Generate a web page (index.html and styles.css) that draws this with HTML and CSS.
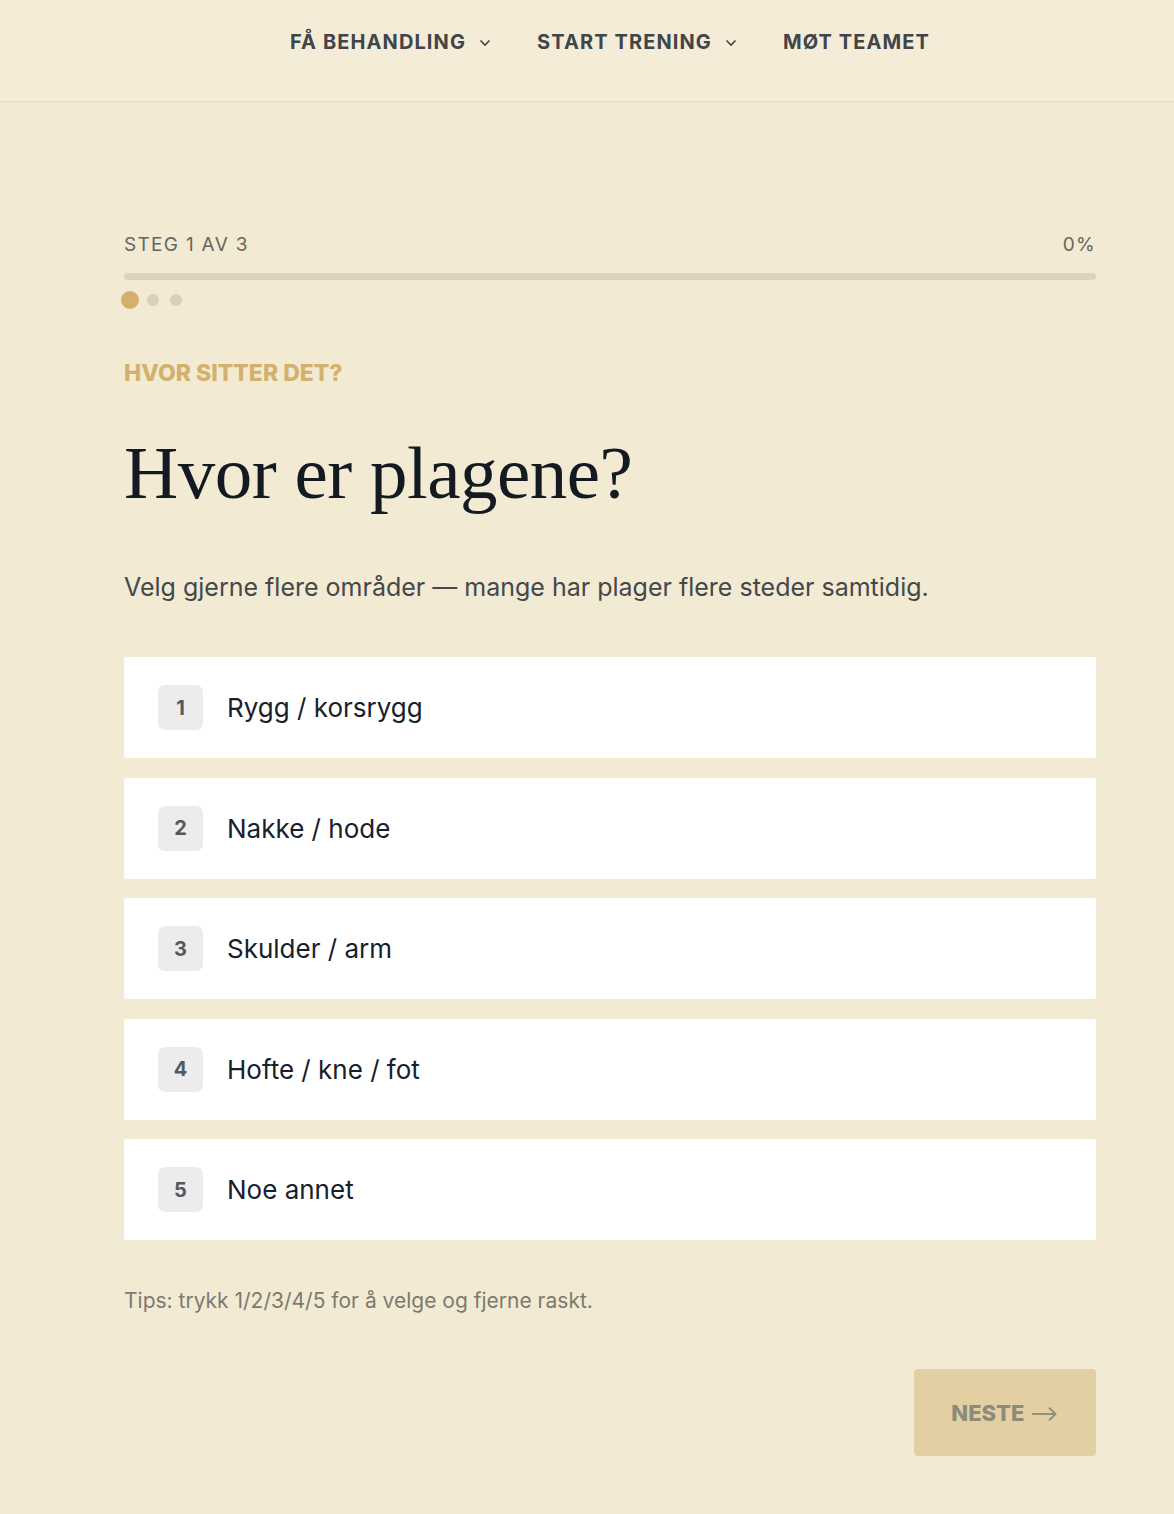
FILE: index.html
```html
<!doctype html>
<html lang="no">

<head>
    <meta charset="utf-8" />
    <meta name="viewport" content="width=device-width, initial-scale=1">
    <link rel="stylesheet" href="styles.css">
</head>

<body>
    <header class="topnav">
        <nav class="menu">
            <a class="menu-item" href="#">Få behandling
                <svg class="caret" viewBox="0 0 12 8" width="12" height="8"><path d="M1.5 1.5 6 6l4.5-4.5" fill="none" stroke="currentColor" stroke-width="1.6"/></svg>
            </a>
            <a class="menu-item" href="#">Start trening
                <svg class="caret" viewBox="0 0 12 8" width="12" height="8"><path d="M1.5 1.5 6 6l4.5-4.5" fill="none" stroke="currentColor" stroke-width="1.6"/></svg>
            </a>
            <a class="menu-item" href="#">Møt teamet</a>
        </nav>
    </header>

    <main class="quiz">
        <div class="progress-head">
            <span>Steg 1 av 3</span>
            <span>0%</span>
        </div>
        <div class="progress-bar"><div class="progress-fill"></div></div>
        <div class="dots">
            <span class="dot active"></span>
            <span class="dot"></span>
            <span class="dot"></span>
        </div>

        <p class="eyebrow">Hvor sitter det?</p>
        <h1 class="question">Hvor er plagene?</h1>
        <p class="lead">Velg gjerne flere områder — mange har plager flere steder samtidig.</p>

        <div class="options">
            <button class="option"><span class="key">1</span>Rygg / korsrygg</button>
            <button class="option"><span class="key">2</span>Nakke / hode</button>
            <button class="option"><span class="key">3</span>Skulder / arm</button>
            <button class="option"><span class="key">4</span>Hofte / kne / fot</button>
            <button class="option"><span class="key">5</span>Noe annet</button>
        </div>

        <p class="tip">Tips: trykk 1/2/3/4/5 for å velge og fjerne raskt.</p>

        <div class="actions">
            <button class="next" disabled>Neste <span class="arrow">⟶</span></button>
        </div>
    </main>
</body>

</html>
```

FILE: styles.css
```css
html {
    font-family: "Inter", "Liberation Sans", sans-serif;
    font-size: 16px;
    line-height: 1.5;
    background: #f2ead3;
    color: #1a1f28;
}

body {
    margin: 0;
}

.topnav {
    height: 102px;
    box-sizing: border-box;
    border-bottom: 1px solid #e2dbc6;
    background: #f4ecd6;
    display: flex;
    justify-content: center;
    align-items: center;
    padding-left: 46px;
}

.menu {
    display: flex;
    gap: 46px;
    padding-bottom: 18px;
}

.menu-item {
    display: flex;
    align-items: center;
    gap: 10px;
    font-size: 20px;
    font-weight: 700;
    text-transform: uppercase;
    letter-spacing: 1.1px;
    color: #41454a;
    text-decoration: none;
}

.caret {
    margin-left: 3px;
    margin-top: 2px;
}

.quiz {
    width: 972px;
    margin-left: 124px;
    padding-top: 130px;
    padding-bottom: 59px;
}

.progress-head {
    display: flex;
    justify-content: space-between;
    font-size: 19px;
    color: #66665f;
    text-transform: uppercase;
    letter-spacing: 1.3px;
    line-height: 26px;
}

.progress-bar {
    margin-top: 15px;
    height: 7px;
    border-radius: 4px;
    background: #dbd5c0;
}

.progress-fill {
    width: 0;
    height: 100%;
}

.dots {
    display: flex;
    align-items: center;
    gap: 11px;
    height: 18px;
    margin-top: 11px;
}

.dot {
    width: 12px;
    height: 12px;
    border-radius: 50%;
    background: #d6d0bd;
}

.dot.active {
    background: #d3b16c;
    transform: scale(1.5);
}

.eyebrow {
    margin: 49px 0 0;
    font-size: 23px;
    font-weight: 800;
    color: #d3b16c;
    text-transform: uppercase;
    letter-spacing: 0;
    line-height: 30px;
}

.question {
    margin: 40px 0 0;
    font-family: "Liberation Serif", serif;
    font-weight: 400;
    font-size: 75px;
    line-height: 90px;
    letter-spacing: -0.5px;
    color: #141a22;
}

.lead {
    margin: 52px 0 0;
    font-size: 25px;
    color: #44484b;
    letter-spacing: 0;
    line-height: 34px;
}

.options {
    margin-top: 53px;
    display: flex;
    flex-direction: column;
    gap: 19.5px;
}

.option {
    display: flex;
    align-items: center;
    gap: 24px;
    height: 101px;
    padding: 0 34px;
    border: 0;
    border-radius: 2px;
    background: #fff;
    font-family: inherit;
    font-size: 26px;
    letter-spacing: 0;
    color: #17202b;
    text-align: left;
    cursor: pointer;
}

.key {
    display: flex;
    justify-content: center;
    align-items: center;
    width: 45px;
    height: 45px;
    border-radius: 7px;
    background: #ececec;
    font-size: 20px;
    font-weight: 700;
    color: #55585c;
    letter-spacing: 0;
}

.tip {
    margin: 46px 0 0;
    font-size: 21px;
    color: #7c7a70;
    letter-spacing: 0;
    line-height: 30px;
}

.actions {
    display: flex;
    justify-content: flex-end;
    margin-top: 53px;
}

.next {
    width: 182px;
    height: 87px;
    border: 0;
    border-radius: 4px;
    background: #e3d0a2;
    font-family: inherit;
    font-size: 22px;
    font-weight: 800;
    text-transform: uppercase;
    color: #8c8b7b;
    letter-spacing: 0;
}

.arrow {
    font-weight: 400;
}
```
